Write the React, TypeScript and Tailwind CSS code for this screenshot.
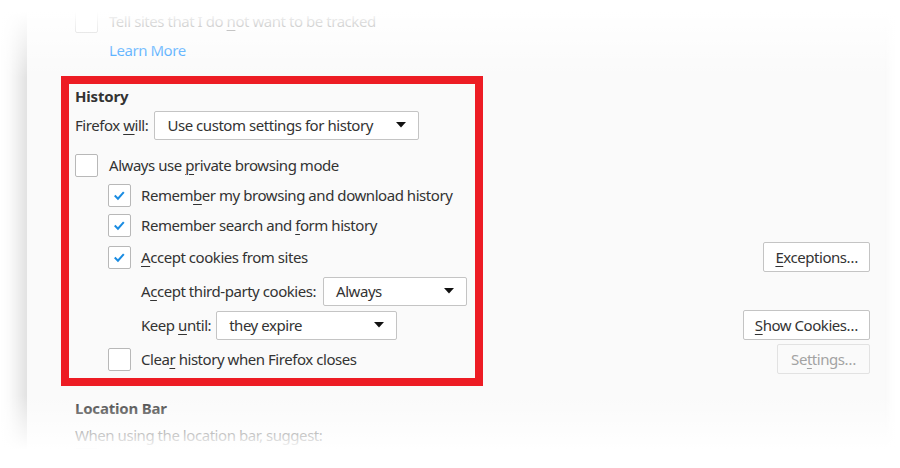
import { ReactNode } from "react";

function Check({ checked = false }: { checked?: boolean }) {
  return (
    <div className="w-[23px] h-[23px] shrink-0 rounded-[2px] border border-[#b8b8b8] bg-white flex items-center justify-center">
      {checked && (
        <svg width="23" height="23" viewBox="0 0 23 23">
          <path d="M6.3 11.6 L9.8 15 L16.2 7.8" fill="none" stroke="#1a8ce2" strokeWidth="2.2" />
        </svg>
      )}
    </div>
  );
}

function U({ children }: { children: ReactNode }) {
  return <span className="underline underline-offset-[3px] decoration-1">{children}</span>;
}

function Select({ value, width }: { value: string; width: string }) {
  return (
    <div className={`${width} h-[29px] rounded-[2px] border border-[#c4c4c4] bg-white flex items-center justify-between pl-[12px] pr-[12px]`}>
      <span>{value}</span>
      <svg width="10" height="6" viewBox="0 0 10 6">
        <path d="M0 0 L10 0 L5 5.5 Z" fill="#111" />
      </svg>
    </div>
  );
}

function Button({ children, disabled = false }: { children: ReactNode; disabled?: boolean }) {
  return (
    <div
      className={`h-[30px] rounded-[2px] border flex items-center ${
        disabled ? "border-[#e2e2e2] text-[#a3a3a3] px-[13px]" : "border-[#c4c4c4] bg-white text-[#333] px-[11px]"
      }`}
    >
      {children}
    </div>
  );
}

export default function App() {
  return (
    <div className="relative w-[900px] h-[468px] bg-white overflow-hidden font-['Noto_Sans',sans-serif] text-[15px] tracking-[-0.45px] text-[#333]">
      <div className="ml-[27px] mr-[15px] h-full bg-[#fafafa] shadow-[-8px_0_18px_rgba(0,0,0,0.14)]">
        <div className="pl-[48px] pt-[6px]">
          <div className="h-[30px] flex items-center gap-[11px]">
            <Check />
            <span>
              Tell sites that I do <U>n</U>ot want to be tracked
            </span>
          </div>
          <div className="h-[28px] flex items-center pl-[34px] text-[#0a8dff]">Learn More</div>

          <div className="h-[18px]" />
          <div className="h-[28px] flex items-center font-bold tracking-[-0.2px]">History</div>
          <div className="h-[30px] flex items-center gap-[6px]">
            <span>
              Firefox <U>w</U>ill:
            </span>
            <Select value="Use custom settings for history" width="w-[265px]" />
          </div>

          <div className="h-[10px]" />
          <div className="h-[30px] flex items-center gap-[11px]">
            <Check />
            <span>
              Always use <U>p</U>rivate browsing mode
            </span>
          </div>

          <div className="pl-[33px]">
            <div className="h-[30px] flex items-center gap-[10px]">
              <Check checked />
              <span>
                Remem<U>b</U>er my browsing and download history
              </span>
            </div>
            <div className="h-[30px] flex items-center gap-[10px]">
              <Check checked />
              <span>
                Remember search and <U>f</U>orm history
              </span>
            </div>
            <div className="h-[34px] flex items-center justify-between pr-[15px]">
              <div className="flex items-center gap-[10px]">
                <Check checked />
                <span>
                  <U>A</U>ccept cookies from sites
                </span>
              </div>
              <Button>
                <span>
                  <U>E</U>xceptions…
                </span>
              </Button>
            </div>
            <div className="h-[34px] flex items-center gap-[7px] pl-[33px]">
              <span>
                A<U>c</U>cept third-party cookies:
              </span>
              <Select value="Always" width="w-[144px]" />
            </div>
            <div className="h-[34px] flex items-center justify-between pr-[15px]">
              <div className="flex items-center gap-[5px] pl-[33px]">
                <span>
                  Keep <U>u</U>ntil:
                </span>
                <Select value="they expire" width="w-[181px]" />
              </div>
              <Button>
                <span>
                  <U>S</U>how Cookies…
                </span>
              </Button>
            </div>
            <div className="h-[34px] flex items-center justify-between pr-[15px]">
              <div className="flex items-center gap-[10px]">
                <Check />
                <span>
                  Clea<U>r</U> history when Firefox closes
                </span>
              </div>
              <Button disabled>
                <span>
                  Se<U>t</U>tings…
                </span>
              </Button>
            </div>
          </div>

          <div className="h-[18px]" />
          <div className="h-[28px] flex items-center font-bold tracking-[-0.2px]">Location Bar</div>
          <div className="h-[26px] flex items-center">When using the location bar, suggest:</div>
          <div className="h-[22px] flex items-start gap-[11px]">
            <Check checked />
            <span className="text-[13px] leading-[20px]">History</span>
          </div>
        </div>
      </div>

      {/* fades top and bottom */}
      <div className="absolute left-0 top-0 w-full h-[78px] bg-gradient-to-b from-white from-15% to-transparent" />
      <div className="absolute left-0 top-[395px] w-full h-[73px] bg-gradient-to-b from-transparent to-white to-75%" />

      {/* red annotation box */}
      <div className="absolute left-[61px] top-[76px] w-[422px] h-[310px] border-[8px] border-[#ed1c24]" />
    </div>
  );
}
